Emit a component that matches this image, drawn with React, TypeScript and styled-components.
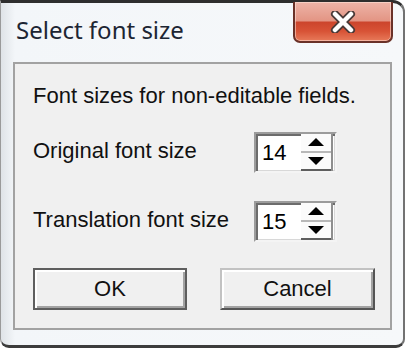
import React from "react";
import styled, { createGlobalStyle } from "styled-components";

const GlobalStyle = createGlobalStyle`
  html, body {
    margin: 0;
    padding: 0;
    background: #ffffff;
  }
  body {
    width: 407px;
    height: 352px;
    overflow: hidden;
  }
`;

const Window = styled.div`
  box-sizing: border-box;
  width: 405px;
  height: 348px;
  display: flex;
  flex-direction: column;
  background: linear-gradient(to right, #dfe3e7 0, #f3f6f9 14px, #f6f8fa 100%);
  border-top: 3px solid #2e2e2e;
  border-right: 2px solid #727272;
  border-bottom: 3px solid #3c3c3c;
  border-left: 1px solid #9a9a9a;
  border-radius: 0 12px 9px 9px;
`;

const TitleBar = styled.div`
  height: 59px;
  display: flex;
  align-items: flex-start;
  padding: 0 10px 0 15px;
`;

const Title = styled.div`
  margin-top: 15px;
  font-family: "Noto Sans", "Open Sans", sans-serif;
  font-size: 24px;
  line-height: 24px;
  color: #1c2533;
`;

const CloseButton = styled.button`
  margin-left: auto;
  margin-top: -1px;
  width: 100px;
  height: 41px;
  padding: 0;
  display: flex;
  align-items: center;
  justify-content: center;
  border: 2px solid #6a3128;
  border-top: none;
  border-radius: 0 0 7px 7px;
  background: linear-gradient(
    to bottom,
    #eeb4a8 0,
    #e39584 48%,
    #cc452c 52%,
    #d85336 75%,
    #e77a5a 100%
  );
  box-shadow: inset 0 0 0 1px rgba(255, 230, 220, 0.55);
`;

const Panel = styled.div`
  box-sizing: border-box;
  margin: 0 11px 0 12px;
  height: 268px;
  border: 2px solid #a2a2a2;
  background: #f0f0f0;
  padding: 19px 0 0 18px;
  font-family: "Liberation Sans", Arial, sans-serif;
  font-size: 22px;
  color: #111111;
`;

const Description = styled.div`
  line-height: 26px;
`;

const Form = styled.div`
  margin-top: 23px;
  display: grid;
  grid-template-columns: 221px 83px;
  row-gap: 28px;
  align-items: center;
`;

const Label = styled.div`
  line-height: 26px;
  margin-top: -3px;
`;

const SpinBox = styled.div`
  box-sizing: border-box;
  height: 41px;
  display: flex;
  background: #ffffff;
  border: 2px solid;
  border-color: #9c9c9c #f4f4f4 #f4f4f4 #9c9c9c;
  box-shadow: inset 2px 2px 0 #6c6c6c, inset -1px -1px 0 #d8d8d8;
`;

const Value = styled.div`
  flex: 1;
  padding-left: 6px;
  display: flex;
  align-items: center;
  color: #000000;
  line-height: 1;
`;

const SpinButtons = styled.div`
  width: 30px;
  margin-right: 2px;
  display: flex;
  flex-direction: column;
  border-right: 2px solid #8e8e8e;
`;

const SpinHalf = styled.div<{ $last?: boolean }>`
  flex: 1;
  display: flex;
  align-items: center;
  justify-content: center;
  background: #fbfbfb;
  border-bottom: 2px solid ${(p) => (p.$last ? "#5e5e5e" : "#b8b8b8")};
`;

const ButtonRow = styled.div`
  margin-top: 26px;
  display: flex;
  gap: 33px;
`;

const DialogButton = styled.button<{ $default?: boolean; $width: number }>`
  box-sizing: border-box;
  width: ${(p) => p.$width}px;
  height: 42px;
  padding: 0;
  background: #f0f0f0;
  font-family: "Liberation Sans", Arial, sans-serif;
  font-size: 22px;
  color: #111111;
  border: 2px solid;
  border-color: ${(p) =>
    p.$default ? "#5e5e5e" : "#c2c2c2 #555555 #555555 #c2c2c2"};
  box-shadow: inset 2px 2px 0 #ffffff, inset -2px -2px 0 #a3a3a3;
`;

const Arrow = ({ up }: { up?: boolean }) => (
  <svg width="16" height="8" viewBox="0 0 16 8">
    <polygon points={up ? "8,0 16,8 0,8" : "0,0 16,0 8,8"} fill="#000000" />
  </svg>
);

const CloseGlyph = () => (
  <svg width="26" height="22" viewBox="0 0 26 22">
    <path
      d="M5 3 L21 19 M21 3 L5 19"
      stroke="#4a3a38"
      strokeWidth="8"
      strokeLinecap="round"
    />
    <path
      d="M5 3 L21 19 M21 3 L5 19"
      stroke="#ffffff"
      strokeWidth="4.5"
      strokeLinecap="round"
    />
  </svg>
);

const Spinner = ({ value }: { value: number }) => (
  <SpinBox>
    <Value>{value}</Value>
    <SpinButtons>
      <SpinHalf>
        <Arrow up />
      </SpinHalf>
      <SpinHalf $last>
        <Arrow />
      </SpinHalf>
    </SpinButtons>
  </SpinBox>
);

const App = () => {
  return (
    <>
      <GlobalStyle />
      <Window>
        <TitleBar>
          <Title>Select font size</Title>
          <CloseButton aria-label="Close">
            <CloseGlyph />
          </CloseButton>
        </TitleBar>
        <Panel>
          <Description>Font sizes for non-editable fields.</Description>
          <Form>
            <Label>Original font size</Label>
            <Spinner value={14} />
            <Label>Translation font size</Label>
            <Spinner value={15} />
          </Form>
          <ButtonRow>
            <DialogButton $default $width={154}>
              OK
            </DialogButton>
            <DialogButton $width={155}>Cancel</DialogButton>
          </ButtonRow>
        </Panel>
      </Window>
    </>
  );
};

export default App;
